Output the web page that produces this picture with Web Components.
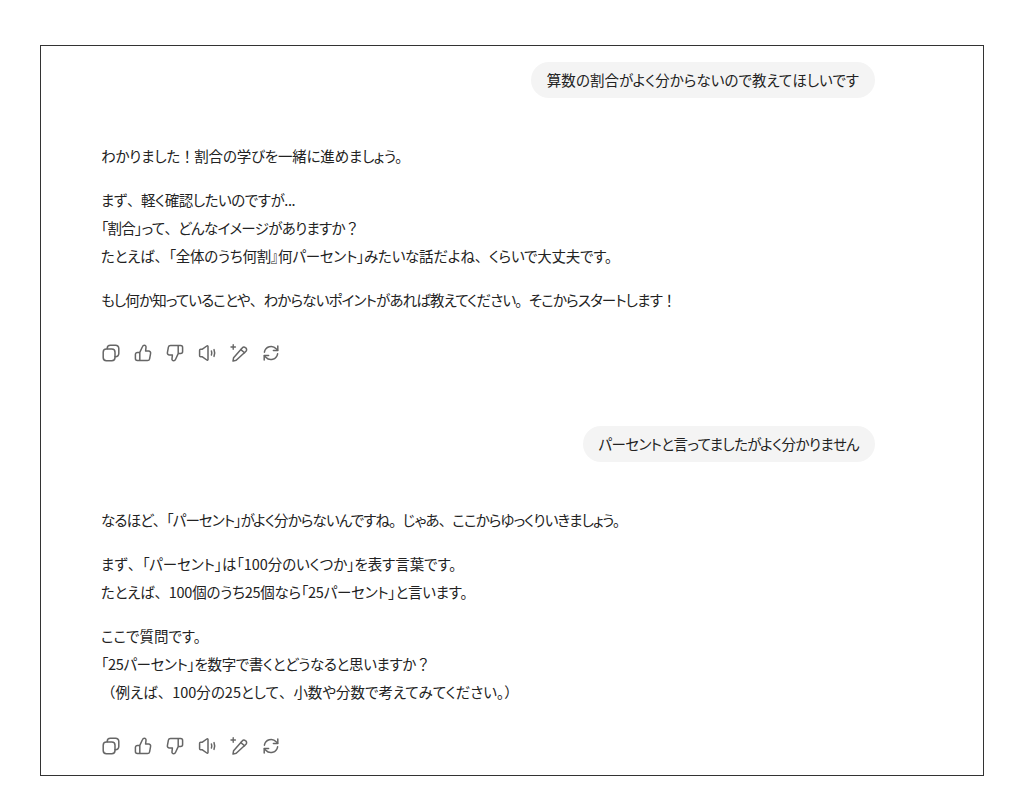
<!DOCTYPE html>
<html lang="ja">
<head>
<meta charset="utf-8">
<style>
    html, body { margin: 0; background: #fff; }
    body { padding: 45px 40px 0; font-family: "Noto Sans CJK JP", sans-serif; }
    /* full width punctuation inside the proportional text */
    .fw { font-feature-settings: normal; }
</style>
</head>
<body>
<chat-frame>
    <user-bubble style="letter-spacing:.04px">算数の割合がよく分からないので教えてほしいです</user-bubble>
    <bot-reply gap="44">
        <p><span style="letter-spacing:-.2px">わかりました<span class="fw">！</span>割合の学びを一緒に進めましょう。</span></p>
        <p><span style="letter-spacing:-.42px">まず<span class="fw">、</span>軽く確認したいのですが...</span><br>
        <span style="letter-spacing:-.7px">「割合」って<span class="fw">、</span>どんなイメージがありますか<span class="fw">？</span></span><br>
        <span style="letter-spacing:-.22px">たとえば<span class="fw">、</span>「全体のうち何割』何パーセント」みたいな話だよね<span class="fw">、</span>くらいで大丈夫です。</span></p>
        <p><span style="letter-spacing:-.83px">もし何か知っていることや<span class="fw">、</span>わからないポイントがあれば教えてください<span class="fw">。</span>そこからスタートします<span class="fw">！</span></span></p>
    </bot-reply>
    <user-bubble style="margin-top:63px;letter-spacing:-.6px">パーセントと言ってましたがよく分かりません</user-bubble>
    <bot-reply gap="44">
        <p><span style="letter-spacing:-.87px">なるほど<span class="fw">、</span>「パーセント」がよく分からないんですね<span class="fw">。</span>じゃあ<span class="fw">、</span>ここからゆっくりいきましょう。</span></p>
        <p><span style="letter-spacing:-.05px">まず<span class="fw">、</span>「パーセント」は「100分のいくつか」を表す言葉です。</span><br>
        <span style="letter-spacing:-.22px">たとえば<span class="fw">、</span>100個のうち25個なら「25パーセント」と言います。</span></p>
        <p style="line-height:28.2px">ここで質問です。<br>
        <span style="letter-spacing:-.33px">「25パーセント」を数字で書くとどうなると思いますか<span class="fw">？</span></span><br>
        <span><span class="fw">（</span>例えば<span class="fw">、</span>100分の25として<span class="fw">、</span>小数や分数で考えてみてください<span class="fw">。）</span></span></p>
    </bot-reply>
</chat-frame>

<script>
class ChatFrame extends HTMLElement {
    constructor() {
        super();
        this.attachShadow({ mode: "open" });
        this.shadowRoot.innerHTML = `
            <style>
                :host {
                    display: flex;
                    flex-direction: column;
                    box-sizing: border-box;
                    width: 944px;
                    height: 731px;
                    padding: 16px 108px 0 60px;
                    border: 1px solid #333;
                    overflow: hidden;
                    color: #222;
                    font-feature-settings: "palt";
                }
            </style>
            <slot></slot>
        `;
    }
}

class UserBubble extends HTMLElement {
    constructor() {
        super();
        this.attachShadow({ mode: "open" });
        this.shadowRoot.innerHTML = `
            <style>
                :host {
                    display: block;
                    align-self: flex-end;
                    height: 36px;
                    padding: 0 16px;
                    border-radius: 18px;
                    background: #f4f4f4;
                    font-size: 14.5px;
                    line-height: 36px;
                    white-space: nowrap;
                }
            </style>
            <slot></slot>
        `;
    }
}

// the row of actions under each answer
class ActionBar extends HTMLElement {
    constructor() {
        super();
        this.attachShadow({ mode: "open" });
        const attrs = 'width="20" height="20" viewBox="0 0 20 20" fill="none" stroke="#666" stroke-width="1.5" stroke-linecap="round" stroke-linejoin="round"';
        const icons = [
            // copy
            '<rect x="2.2" y="6" width="11.8" height="11.8" rx="3.2"/><path d="M6.2 5.8V5.4a3.2 3.2 0 0 1 3.2-3.2h5.2a3.2 3.2 0 0 1 3.2 3.2v5.2a3.2 3.2 0 0 1-3.2 3.2h-.6"/>',
            // thumb up
            '<path d="M6.8 9.4v8.2H4.4a2 2 0 0 1-2-2v-4.2a2 2 0 0 1 2-2h2.4l2.6-5.6c.4-1 1-1.6 1.9-1.6 1.2 0 1.9 1 1.7 2.2L12.6 8h3a2 2 0 0 1 2 2.4l-1 5.4a2.2 2.2 0 0 1-2.2 1.8H6.8"/>',
            // thumb down
            '<path d="M13.2 10.6V2.4h2.4a2 2 0 0 1 2 2v4.2a2 2 0 0 1-2 2h-2.4l-2.6 5.6c-.4 1-1 1.6-1.9 1.6-1.2 0-1.9-1-1.7-2.2l.4-3.6h-3a2 2 0 0 1-2-2.4l1-5.4a2.2 2.2 0 0 1 2.2-1.8h8.6"/>',
            // read aloud
            '<path d="M2.6 7.2v5.6c0 .6.4 1 1 1h1.8l4.4 3.2c.6.4 1.2 0 1.2-.6V3.6c0-.6-.6-1-1.2-.6L5.4 6.2H3.6c-.6 0-1 .4-1 1z"/><path d="M14.4 8c.5 1.3.5 2.7 0 4M17 6.6c.9 2.2.9 4.6 0 6.8"/>',
            // edit with sparkle
            '<path d="M7.2 17.2l-3.2.9.6-3.4 8.6-9.8a2.3 2.3 0 0 1 3.2-.3l.4.3a2.3 2.3 0 0 1 .2 3.3z"/><path d="M11.8 6.6l3.8 3.2"/><path d="M4.2 1.8v4.4M2 4h4.4" stroke-width="1.4"/>',
            // regenerate
            '<path d="M3.4 9.2a6.8 6.8 0 0 1 11.8-3.4l1.4 1.4"/><path d="M16.8 3v4.4h-4.4"/><path d="M16.6 10.8a6.8 6.8 0 0 1-11.8 3.4l-1.4-1.4"/><path d="M3.2 17v-4.4h4.4"/>',
        ];
        this.shadowRoot.innerHTML = `
            <style>
                :host {
                    display: flex;
                    gap: 12px;
                    height: 20px;
                }
                svg {
                    display: block;
                    flex: none;
                }
            </style>
            ${icons.map((p) => `<svg ${attrs}>${p}</svg>`).join("")}
        `;
    }
}

class BotReply extends HTMLElement {
    constructor() {
        super();
        this.attachShadow({ mode: "open" });
        this.shadowRoot.innerHTML = `
            <style>
                :host {
                    display: block;
                    font-size: 14.5px;
                    line-height: 28px;
                }
                .body {
                    display: flex;
                    flex-direction: column;
                    gap: 16px;
                }
                ::slotted(p) {
                    margin: 0;
                }
                action-bar {
                    margin-top: 29px;
                }
            </style>
            <div class="body" style="margin-top:${this.getAttribute("gap") || 0}px"><slot></slot></div>
            <action-bar></action-bar>
        `;
    }
}

customElements.define("chat-frame", ChatFrame);
customElements.define("user-bubble", UserBubble);
customElements.define("action-bar", ActionBar);
customElements.define("bot-reply", BotReply);
</script>
</body>
</html>
